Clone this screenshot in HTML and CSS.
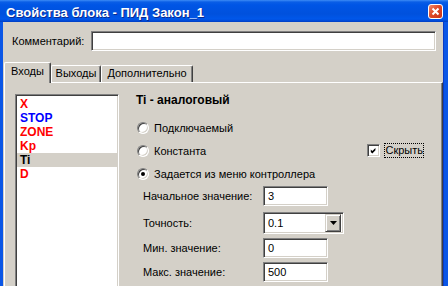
FILE: index.html
```html
<!DOCTYPE html>
<html lang="ru">
<head>
  <meta charset="UTF-8">
  <title>Свойства блока - ПИД Закон_1</title>
  <link rel="stylesheet" href="styles.css">
</head>
<body>

  <div class="window">
    <div class="titlebar">
      <span class="title">Свойства блока - ПИД Закон_1</span>
      <div class="close-btn">
        <svg width="13" height="13" viewBox="0 0 13 13">
          <path d="M3.5 3.5 L9.5 9.5 M9.5 3.5 L3.5 9.5" stroke="#fff" stroke-width="2" fill="none"/>
        </svg>
      </div>
    </div>

    <div class="frame">
      <div class="comment-row">
        <label>Комментарий:</label>
        <div class="field comment-field"></div>
      </div>

      <div class="tabs">
        <div class="tab active">Входы</div>
        <div class="tab tab-out">Выходы</div>
        <div class="tab tab-extra">Дополнительно</div>
      </div>

      <div class="panel">
        <div class="field listbox">
          <div class="item red">X</div>
          <div class="item blue">STOP</div>
          <div class="item red">ZONE</div>
          <div class="item red">Kp</div>
          <div class="item selected">Ti</div>
          <div class="item red">D</div>
        </div>

        <div class="props">
          <div class="props-title">Ti - аналоговый</div>

          <div class="options">
            <div class="radio-row">
              <span class="radio"></span>
              <span>Подключаемый</span>
            </div>
            <div class="radio-row">
              <span class="radio"></span>
              <span>Константа</span>
              <div class="check">
                <span class="checkbox">
                  <svg width="9" height="9" viewBox="0 0 9 9">
                    <path d="M1 2 L3 4 L7 0 L7 3 L3 7 L1 5 Z" fill="#000"/>
                  </svg>
                </span>
                <span class="check-label">Скрыть</span>
              </div>
            </div>
            <div class="radio-row">
              <span class="radio checked"></span>
              <span>Задается из меню контроллера</span>
            </div>
          </div>

          <div class="form">
            <div class="form-row">
              <label>Начальное значение:</label>
              <div class="field input">3</div>
            </div>
            <div class="form-row row-select">
              <label>Точность:</label>
              <div class="field select">
                <span class="select-value">0.1</span>
                <span class="select-btn">
                  <svg width="7" height="4" viewBox="0 0 7 4">
                    <path d="M0 0 H7 L3.5 4 Z" fill="#000"/>
                  </svg>
                </span>
              </div>
            </div>
            <div class="form-row">
              <label>Мин. значение:</label>
              <div class="field input">0</div>
            </div>
            <div class="form-row">
              <label>Макс. значение:</label>
              <div class="field input">500</div>
            </div>
          </div>
        </div>
      </div>
    </div>
  </div>

</body>
</html>
```

FILE: styles.css
```css
body {
  margin: 0;
  font-family: "Liberation Sans", Arial, sans-serif;
  font-size: 11px;
  color: #000;
  background: #d4d0c8;
}

.window {
  width: 448px;
  height: 286px;
  overflow: hidden;
  display: flex;
  flex-direction: column;
}

/* title bar */

.titlebar {
  flex: none;
  height: 22px;
  display: flex;
  align-items: center;
  justify-content: space-between;
  padding: 0 5px 0 6px;
  background: linear-gradient(#3d8cf5 0, #0a5ee6 2px, #0055e5 5px, #0051dd 14px, #0057ea 19px, #0048d4 21px, #003cc0 22px);
}

.title {
  color: #fff;
  font-weight: bold;
  font-size: 13px;
  text-shadow: 1px 1px #0b2a8f;
  padding-top: 2px;
}

.close-btn {
  width: 13px;
  height: 13px;
  margin-top: 1px;
  border: 1px solid #fff;
  border-radius: 3px;
  background: linear-gradient(135deg, #f08a6c, #df4a27 45%, #c7331a);
  display: flex;
}

/* frame */

.frame {
  flex: 1;
  display: flex;
  flex-direction: column;
  border-left: 3px solid #0a56e6;
  border-right: 4px solid #0a56e6;
  box-shadow: inset -1px 0 #0b3bc4;
  padding: 0 1px;
}

.field {
  box-sizing: border-box;
  background: #fff;
  border: 1px solid;
  border-color: #808080 #fff #fff #808080;
  box-shadow: inset 1px 1px #404040, inset -1px -1px #d4d0c8;
}

.comment-row {
  display: flex;
  align-items: center;
  padding: 9px 0 0 8px;
}

.comment-row label {
  width: 79px;
}

.comment-field {
  width: 345px;
  height: 20px;
}

/* tabs */

.tabs {
  display: flex;
  align-items: flex-end;
  height: 20px;
  margin-top: 11px;
}

.tab {
  box-sizing: border-box;
  height: 17px;
  line-height: 15px;
  text-align: center;
  border-top: 1px solid #fff;
  border-left: 1px solid #fff;
  border-right: 1px solid #404040;
  box-shadow: inset -1px 0 #808080;
  border-radius: 2px 2px 0 0;
}

.tab.active {
  position: relative;
  z-index: 1;
  width: 47px;
  height: 21px;
  line-height: 17px;
  margin-bottom: -1px;
  background: #d4d0c8;
}

.tab-out {
  width: 50px;
}

.tab-extra {
  width: 92px;
}

/* panel */

.panel {
  flex: 1;
  display: flex;
  align-items: flex-start;
  border-top: 1px solid #fff;
  border-left: 1px solid #fff;
  border-right: 1px solid #404040;
  box-shadow: inset -1px 0 #808080;
  padding: 11px 0 0 10px;
}

.listbox {
  flex: none;
  width: 104px;
  height: 240px;
  padding: 2px 1px 0 1px;
}

.item {
  height: 14px;
  line-height: 14px;
  padding-left: 3px;
  font-weight: bold;
  font-size: 12px;
}

.red {
  color: #ff0000;
}

.blue {
  color: #0000ff;
}

.selected {
  background: #d4d0c8;
}

.props {
  flex: 1;
  margin-left: 17px;
}

.props-title {
  height: 13px;
  line-height: 13px;
  font-weight: bold;
  font-size: 12px;
}

.options {
  margin-top: 9px;
}

.radio-row {
  height: 23px;
  display: flex;
  align-items: center;
}

.radio {
  box-sizing: border-box;
  width: 12px;
  height: 12px;
  margin: 0 5px 0 1px;
  border-radius: 50%;
  background: #fff;
  border: 1px solid;
  border-color: #808080 #fff #fff #808080;
  box-shadow: inset 1px 1px #404040, inset -1px -1px #d4d0c8;
  display: flex;
  align-items: center;
  justify-content: center;
}

.radio.checked::after {
  content: "";
  width: 4px;
  height: 4px;
  border-radius: 50%;
  background: #000;
}

.check {
  display: flex;
  align-items: center;
  margin-left: auto;
  margin-right: 18px;
}

.checkbox {
  box-sizing: border-box;
  width: 13px;
  height: 13px;
  padding: 2px;
  background: #fff;
  border: 1px solid;
  border-color: #808080 #fff #fff #808080;
  box-shadow: inset 1px 1px #404040, inset -1px -1px #d4d0c8;
  display: flex;
}

.check-label {
  margin-left: 4px;
  padding: 1px 1px 2px 1px;
  outline: 1px dotted #000;
  outline-offset: -1px;
}

/* form */

.form {
  margin-top: 1px;
  padding-left: 7px;
}

.form-row {
  display: flex;
  align-items: center;
  height: 20px;
  margin-top: 4px;
}

.form-row:first-child {
  margin-top: 0;
}

.form-row label {
  width: 120px;
}

.row-select {
  height: 22px;
  margin-top: 6px;
}

.input {
  width: 65px;
  height: 20px;
  line-height: 18px;
  padding-left: 4px;
}

.select {
  width: 81px;
  height: 22px;
  display: flex;
  align-items: center;
  padding: 2px;
}

.select-value {
  flex: 1;
  padding-left: 2px;
}

.select-btn {
  box-sizing: border-box;
  width: 16px;
  height: 18px;
  background: #d4d0c8;
  border: 1px solid;
  border-color: #d4d0c8 #404040 #404040 #d4d0c8;
  box-shadow: inset 1px 1px #fff, inset -1px -1px #808080;
  display: flex;
  align-items: center;
  justify-content: center;
}
```
